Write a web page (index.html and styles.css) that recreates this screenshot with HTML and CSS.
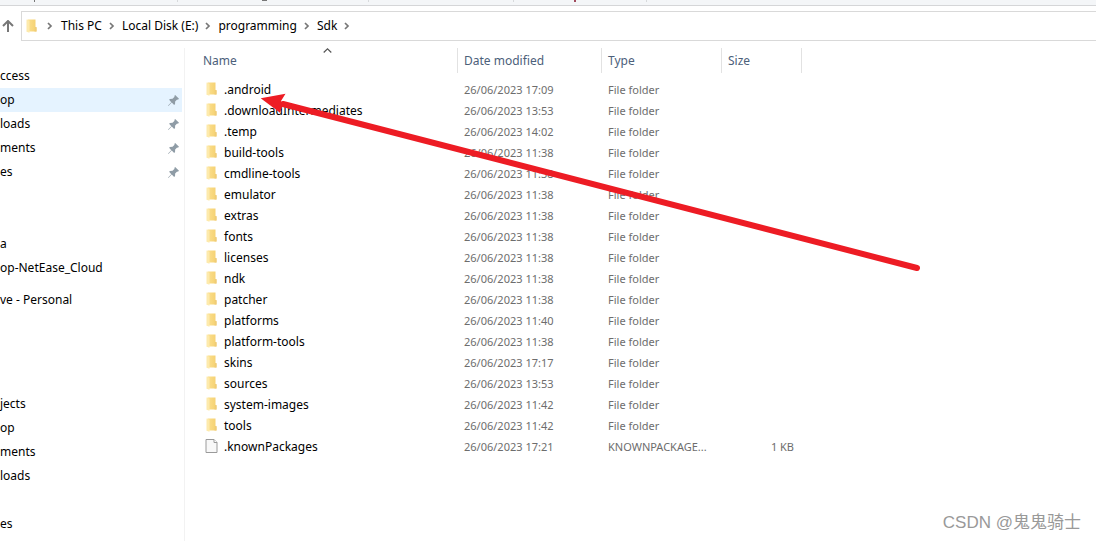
FILE: index.html
```html
<!DOCTYPE html>
<html lang="en">
<head>
<meta charset="utf-8">
<title>Sdk</title>
<link rel="stylesheet" href="styles.css">
</head>
<body>
<svg class="defs" aria-hidden="true">
  <defs>
    <linearGradient id="gold" x1="0" x2="1" y1="0" y2="0"><stop offset="0" stop-color="#fbe08f"/><stop offset="1" stop-color="#f5d070"/></linearGradient>
    <symbol id="folder" viewBox="0 0 12 14">
      <path d="M2 .5h8V8l1 .5v4H2z" fill="url(#gold)"/>
      <path d="M9.500 8h1.500v4.500H9z" fill="#efcc78"/>
      <path d="M1 .5l3 1.200v12l-3-1z" fill="#fdeaac"/>
    </symbol>
    <symbol id="file" viewBox="0 0 12 14">
      <path d="M.5.5h8l3 3v10H.5z" fill="#f8f8f8" stroke="#9a9a9a"/>
      <path d="M8.500.5v3h3" fill="#fff" stroke="#9a9a9a"/>
    </symbol>
    <symbol id="pin" viewBox="0 0 10 10">
      <path d="M6.500 0L10 3.500 9 4.300 8.300 4 6.500 5.900 6.400 8.200 5.600 9 3.400 6.900.6 9.700 0 10 .3 9.300 3 6.500 1 4.400 1.800 3.600 4.100 3.500 6 1.700 5.700.9z" fill="#8f9ca6"/>
    </symbol>
    <symbol id="chev" viewBox="0 0 6 8"><path d="M1 1l3 3-3 3" fill="none" stroke="#777" stroke-width="1.700"/></symbol>
  </defs>
</svg>
<div class="strip" aria-hidden="true"><i></i><i></i><i></i><i></i><i></i><i></i><i></i></div>
<header class="bar">
  <button class="up" aria-label="Up"><svg viewBox="0 0 12 12"><path d="M6 12V1.500M1 6l5-5 5 5" fill="none" stroke="#777" stroke-width="2"/></svg></button>
  <nav class="path" aria-label="Address">
    <svg class="folder"><use href="#folder"/></svg>
    <svg class="chev first"><use href="#chev"/></svg><a href="#">This PC</a>
    <svg class="chev"><use href="#chev"/></svg><a href="#">Local Disk (E:)</a>
    <svg class="chev"><use href="#chev"/></svg><a href="#">programming</a>
    <svg class="chev"><use href="#chev"/></svg><a href="#">Sdk</a>
    <svg class="chev"><use href="#chev"/></svg>
  </nav>
</header>
<div class="body">
  <nav class="side" aria-label="Folders">
    <a href="#">ccess</a>
    <a href="#" class="on">op<svg><use href="#pin"/></svg></a>
    <a href="#">loads<svg><use href="#pin"/></svg></a>
    <a href="#">ments<svg><use href="#pin"/></svg></a>
    <a href="#">es<svg><use href="#pin"/></svg></a>
    <a href="#" class="skip">a</a>
    <a href="#">op-NetEase_Cloud</a>
    <a href="#" class="drive">ve - Personal</a>
    <a href="#" class="pc">jects</a>
    <a href="#">op</a>
    <a href="#">ments</a>
    <a href="#">loads</a>
    <a href="#" class="last">es</a>
  </nav>
  <main class="files">
    <svg class="sort" viewBox="0 0 9 5" aria-hidden="true"><path d="M.7 4.500L4.500 .9l3.800 3.600" fill="none" stroke="#555" stroke-width="1.200"/></svg>
    <table>
      <colgroup><col class="c-name"><col class="c-date"><col class="c-type"><col class="c-size"></colgroup>
      <thead><tr><th><button>Name</button></th><th><button>Date modified</button></th><th><button>Type</button></th><th><button>Size</button></th></tr></thead>
      <tbody>
        <tr><td><svg><use href="#folder"/></svg>.android</td><td>26/06/2023 17:09</td><td>File folder</td><td></td></tr>
        <tr><td><svg><use href="#folder"/></svg>.downloadIntermediates</td><td>26/06/2023 13:53</td><td>File folder</td><td></td></tr>
        <tr><td><svg><use href="#folder"/></svg>.temp</td><td>26/06/2023 14:02</td><td>File folder</td><td></td></tr>
        <tr><td><svg><use href="#folder"/></svg>build-tools</td><td>26/06/2023 11:38</td><td>File folder</td><td></td></tr>
        <tr><td><svg><use href="#folder"/></svg>cmdline-tools</td><td>26/06/2023 11:38</td><td>File folder</td><td></td></tr>
        <tr><td><svg><use href="#folder"/></svg>emulator</td><td>26/06/2023 11:38</td><td>File folder</td><td></td></tr>
        <tr><td><svg><use href="#folder"/></svg>extras</td><td>26/06/2023 11:38</td><td>File folder</td><td></td></tr>
        <tr><td><svg><use href="#folder"/></svg>fonts</td><td>26/06/2023 11:38</td><td>File folder</td><td></td></tr>
        <tr><td><svg><use href="#folder"/></svg>licenses</td><td>26/06/2023 11:38</td><td>File folder</td><td></td></tr>
        <tr><td><svg><use href="#folder"/></svg>ndk</td><td>26/06/2023 11:38</td><td>File folder</td><td></td></tr>
        <tr><td><svg><use href="#folder"/></svg>patcher</td><td>26/06/2023 11:38</td><td>File folder</td><td></td></tr>
        <tr><td><svg><use href="#folder"/></svg>platforms</td><td>26/06/2023 11:40</td><td>File folder</td><td></td></tr>
        <tr><td><svg><use href="#folder"/></svg>platform-tools</td><td>26/06/2023 11:38</td><td>File folder</td><td></td></tr>
        <tr><td><svg><use href="#folder"/></svg>skins</td><td>26/06/2023 17:17</td><td>File folder</td><td></td></tr>
        <tr><td><svg><use href="#folder"/></svg>sources</td><td>26/06/2023 13:53</td><td>File folder</td><td></td></tr>
        <tr><td><svg><use href="#folder"/></svg>system-images</td><td>26/06/2023 11:42</td><td>File folder</td><td></td></tr>
        <tr><td><svg><use href="#folder"/></svg>tools</td><td>26/06/2023 11:42</td><td>File folder</td><td></td></tr>
        <tr><td><svg><use href="#file"/></svg>.knownPackages</td><td>26/06/2023 17:21</td><td>KNOWNPACKAGE...</td><td>1 KB</td></tr>
      </tbody>
    </table>
  </main>
</div>
<svg class="arrow" viewBox="0 0 660 180" aria-hidden="true">
  <path d="M23 14L657 178" stroke="#ed1c24" stroke-width="6" stroke-linecap="round"/>
  <path d="M.7 8.300L25.500 3.700 21 11 22 17 20 22.700z" fill="#ed1c24"/>
</svg>
<div class="mark">CSDN @鬼鬼骑士</div>
</body>
</html>
```
FILE: styles.css
```css
* { box-sizing: border-box; }
body {
  margin: 0;
  min-height: 100vh;
  display: flex;
  flex-direction: column;
  position: relative;
  background: #fff;
  color: #000;
  font: 11px/16px "Noto Sans", "Noto Sans CJK SC", sans-serif;
}
a { color: inherit; text-decoration: none; }
button { border: 0; padding: 0; background: none; font: inherit; color: inherit; }
.defs { position: absolute; width: 0; height: 0; }

.strip { display: flex; height: 6px; background: #f4f6f8; border-bottom: 1px solid #d5d6d8; }
.strip i { width: 1px; height: 2px; background: #d8dadc; }
.strip i:nth-child(1) { margin-left: 34px; background: #777; }
.strip i:nth-child(2) { margin-left: 142px; }
.strip i:nth-child(3) { margin-left: 84px; width: 5px; height: 1px; background: #777; }
.strip i:nth-child(4) { margin-left: 101px; }
.strip i:nth-child(5) { margin-left: 144px; }
.strip i:nth-child(6) { margin-left: 60px; width: 2px; background: #a04a5c; }
.strip i:nth-child(7) { margin-left: 70px; }

.bar { display: flex; align-items: center; padding-top: 5px; }
.up { display: flex; width: 21px; padding-left: 2px; }
.up svg { width: 12px; height: 12px; }
.path {
  flex: 1;
  display: flex;
  align-items: center;
  height: 30px;
  padding-left: 3px;
  border: 1px solid #d9d9d9;
  border-right: 0;
  font-size: 12px;
}
.path .folder { width: 13px; height: 14px; }
.chev { width: 6px; height: 8px; margin: 0 7px; }
.chev.first { margin: 0 8px 0 9px; }

.body { flex: 1; display: flex; padding-top: 7px; }
.side { width: 185px; padding: 16px 2px 0 0; border-right: 1px solid #f2f2f2; font-size: 12px; }
.side a { display: flex; align-items: center; justify-content: space-between; height: 24px; padding-right: 3px; }
.side .on { background: #e5f3ff; }
.side svg { width: 11px; height: 11px; }
.side .skip { margin-top: 48px; }
.side .drive { margin-top: 8px; }
.side .pc { margin-top: 80px; }
.side .last { margin-top: 24px; }

.files { flex: 1; position: relative; }
.sort { position: absolute; left: 138px; top: 0; width: 9px; height: 5px; }
table { width: 617px; table-layout: fixed; border-collapse: separate; border-spacing: 0; }
.c-name { width: 273px; }
.c-date { width: 144px; }
.c-type { width: 120px; }
.c-size { width: 80px; }
th { height: 25px; padding: 0 0 0 6px; border-right: 1px solid #e2e2e2; text-align: left; font-size: 12px; font-weight: 400; color: #4c607a; }
th:first-child { padding-left: 18px; }
td { height: 21px; padding: 0 0 0 6px; white-space: nowrap; color: #6d6d6d; }
td:first-child { padding-left: 20px; color: #000; font-size: 12px; }
td:last-child { padding-right: 8px; text-align: right; }
td svg { width: 13px; height: 14px; margin-right: 6px; vertical-align: -2px; }
tbody::before { content: ""; display: table-row; height: 6px; }

.arrow { position: absolute; left: 260px; top: 90px; width: 660px; height: 180px; overflow: visible; }
.mark { position: absolute; right: 15px; bottom: 6px; font: 17px/24px "Liberation Sans", "Noto Sans CJK SC", sans-serif; color: #999; }
```
